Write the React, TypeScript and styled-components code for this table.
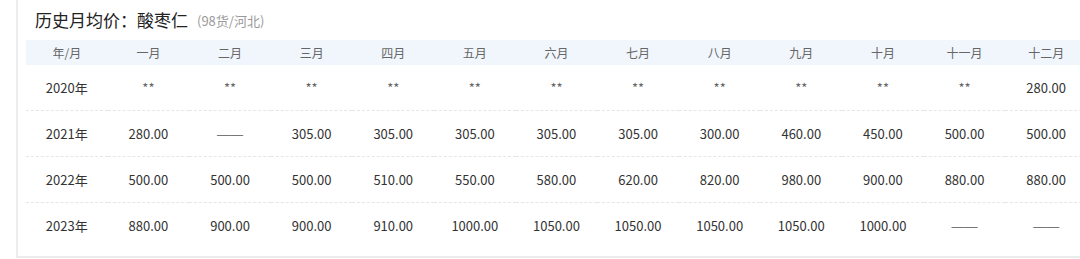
import styled, { createGlobalStyle } from 'styled-components';

const GlobalStyle = createGlobalStyle`
  html, body {
    margin: 0;
    padding: 0;
    background: #fff;
    font-family: "Noto Sans CJK SC", "Noto Sans", sans-serif;
  }
`;

const Page = styled.div`
  width: 1080px;
  height: 259px;
  overflow: hidden;
`;
const Card = styled.div`
  margin-left: 16px;
  width: 1100px;
  height: 258px;
  box-sizing: border-box;
  border-left: 2px solid #ececec;
  border-bottom: 2px solid #ececec;
  padding-left: 8px;
`;
const TitleBar = styled.div`
  height: 40px;
  display: flex;
  align-items: center;
  padding-left: 9px;
  padding-bottom: 1px;
  box-sizing: border-box;
`;
const Title = styled.h2`
  margin: 0;
  font-size: 17px;
  font-weight: 400;
  color: #222;
`;
const Sub = styled.span`
  margin-left: 9px;
  font-size: 13px;
  color: #9a9a9a;
  padding-top: 2px;
`;
const Table = styled.table`
  border-collapse: collapse;
  table-layout: fixed;
  width: 1061px;
`;
const Head = styled.th`
  height: 25px;
  padding: 0;
  background: #f1f6fd;
  font-size: 12px;
  font-weight: 400;
  color: #666;
  text-align: center;
`;
const Row = styled.tr`
  border-top: 1px dashed #e6e6e6;

  &:first-child {
    border-top: 0;
  }
`;
const Cell = styled.td<{ $muted?: boolean }>`
  height: 45px;
  padding: 0;
  text-align: center;
  font-size: 13px;
  color: ${p => (p.$muted ? '#666' : '#333')};
`;
const Dash = styled.span`
  font-family: "Liberation Sans", sans-serif;
  color: #777;
`;

const months = ['一月', '二月', '三月', '四月', '五月', '六月', '七月', '八月', '九月', '十月', '十一月', '十二月'];

const DASH = '——';
const data: { year: string; values: string[] }[] = [
  { year: '2020年', values: ['**', '**', '**', '**', '**', '**', '**', '**', '**', '**', '**', '280.00'] },
  { year: '2021年', values: ['280.00', DASH, '305.00', '305.00', '305.00', '305.00', '305.00', '300.00', '460.00', '450.00', '500.00', '500.00'] },
  { year: '2022年', values: ['500.00', '500.00', '500.00', '510.00', '550.00', '580.00', '620.00', '820.00', '980.00', '900.00', '880.00', '880.00'] },
  { year: '2023年', values: ['880.00', '900.00', '900.00', '910.00', '1000.00', '1050.00', '1050.00', '1050.00', '1050.00', '1000.00', DASH, DASH] },
];

const App = () => (
  <Page>
    <GlobalStyle />
    <Card>
      <TitleBar>
        <Title>历史月均价：酸枣仁</Title>
        <Sub>(98货/河北)</Sub>
      </TitleBar>
      <Table>
        <thead>
          <tr>
            <Head>年/月</Head>
            {months.map(m => <Head key={m}>{m}</Head>)}
          </tr>
        </thead>
        <tbody>
          {data.map(r => (
            <Row key={r.year}>
              <Cell>{r.year}</Cell>
              {r.values.map((v, i) => (
                <Cell key={i} $muted={v === '**'}>
                  {v === DASH ? <Dash>{v}</Dash> : v}
                </Cell>
              ))}
            </Row>
          ))}
        </tbody>
      </Table>
    </Card>
  </Page>
);

export default App;
